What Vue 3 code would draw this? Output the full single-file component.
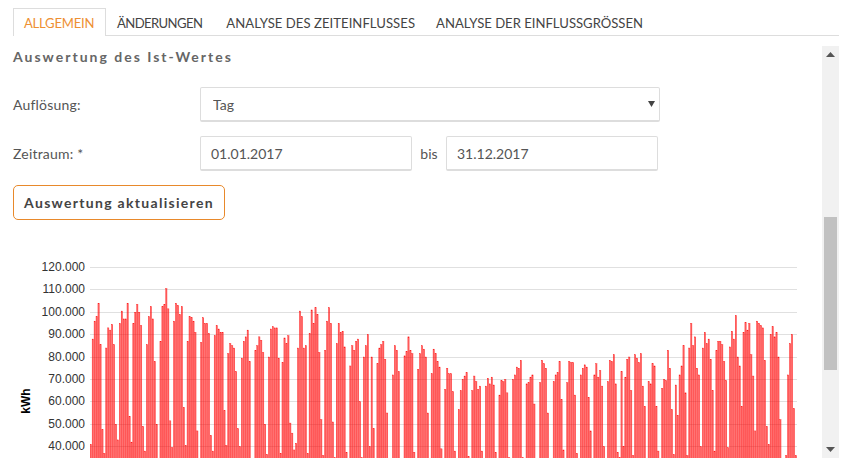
<script setup>
const tabs = ['Allgemein', 'Änderungen', 'Analyse des Zeiteinflusses', 'Analyse der Einflussgrößen']
const weeks = [
  [88,96,98,104,85.5,47.5,37],[84,93,92,94.5,85.5,50,43],[95,100.5,97,97,104,53.5,42],[95,100,103.5,100,94,49,38],
  [85.5,98,102.5,97,78,50,0],[87,102.5,103.5,110.5,101.5,51.5,39.5],[96,104,103,99,102.5,57.5,40.5],[87,98,97.5,96,91,47,0],
  [86.5,97.5,95,95,90.5,45,38],[89.5,94,92.5,91,91,56,40.5],[81.5,86,85,84,73.5,48,40],[79.5,87,89,92,78,0,0],
  [83,85,89,87.5,82,50,36.5],[80,92.5,93.5,93,93,79.5,37],[77.5,88.5,86,89.5,50.5,46,38.5],[41.5,84,100.5,98,84,85,37],
  [90.5,101,95,102,99,82,52],[36,83,96,102,95,51,35],[86,95,91,91.5,84.5,37.5,0],[76,85,83,87,88,60,35],
  [80,85,90,40,80,48,0],[77,84,85.5,87,79,55,0],[0,72,85,83,73.5,0,0],[80.5,82.5,89,83,81.5,37.5,0],
  [74.5,81.5,85,83.5,80,55,0],[72.5,83.5,81.5,78,75.5,39,0],[65.5,75,72.5,72.5,64.5,38,0],[56.5,65,70,71.5,73,35.5,0],
  [65,71.5,69,65.5,67,38,0],[67,70.5,68,71,67.5,37.5,0],[63,69.5,69,70,64,35,0],[70,72,75.5,75,78.5,35,0],
  [68,68.5,71,72,59,0,0],[68.5,78.5,77,75,55,0,0],[69,72,73,78,61,38.5,0],[68.5,78,77.5,77.5,63,37,0],
  [72,75,76.5,75.5,62,47,0],[72,77,71,74,67,40,0],[69,78.5,78,81,68,37.5,35],[73.5,40,71,79,80,65,36],
  [81,79.5,77.5,81.5,67,58,0],[69,68,77,76,58,38,0],[66,70,69.5,83,75,56.5,36.5],[67.5,54,72,76,85,64,36],
  [84,95,85,89,75,72,40],[84,91,86,88,79,65,38],[83,87,87,85.5,78,69.5,39.5],[84.5,91.5,88,98.5,80,76,58],
  [91,95.5,92,95,81,71.5,47],[96,95,94,93,78.5,49,41],[90,93.5,89,91,80,52,0],[0,36,72,86,90,57,36]
]
const values = [41, ...weeks.flat()]
const bars = values
  .map((v, i) => ({ x: 90 + i * 1.937, y: 267.4 + (120 - v) * 2.24, v }))
  .filter((b) => b.v > 0)
const gridRows = [267, 289, 312, 334, 357, 379, 401, 424, 446]
const ticks = ['120.000', '110.000', '100.000', '90.000', '80.000', '70.000', '60.000', '50.000', '40.000']
</script>

<template>
  <div class="page">
    <nav class="tabs">
      <a v-for="(t, i) in tabs" :key="t" class="tab" :class="['tab-' + i, { active: i === 0 }]">{{ t }}</a>
    </nav>
    <div class="panel">
      <main class="content">
        <h2 class="heading">Auswertung des Ist-Wertes</h2>
        <div class="row first">
          <label class="label">Auflösung:</label>
          <div class="select-wrap">
            <select class="control select"><option>Tag</option></select>
            <svg class="caret" width="7" height="6" viewBox="0 0 7 6"><path d="M0 0h7L3.5 6z" fill="#444" /></svg>
          </div>
        </div>
        <div class="row second">
          <label class="label">Zeitraum: *</label>
          <input class="control date" value="01.01.2017" />
          <span class="bis">bis</span>
          <input class="control date" value="31.12.2017" />
        </div>
        <button class="update">Auswertung aktualisieren</button>
        <svg class="chart" width="822" height="230" viewBox="0 240 822 230">
          <line v-for="r in gridRows" :key="r" x1="90" x2="797" :y1="r + 0.5" :y2="r + 0.5" class="grid" />
          <rect v-for="(b, i) in bars" :key="i" :x="b.x + 0.2" :y="b.y" width="1.25" :height="470 - b.y" class="bar" />
          <text v-for="(t, i) in ticks" :key="t" x="85" :y="gridRows[i] + 4" class="tick">{{ t }}</text>
          <text class="unit" transform="translate(30 401) rotate(-90)">kWh</text>
        </svg>
      </main>
      <aside class="scrollbar">
        <svg class="arrow" width="9" height="5" viewBox="0 0 9 5"><path d="M0 5L4.5 0 9 5z" fill="#555" /></svg>
        <div class="track"><div class="thumb"></div></div>
        <svg class="arrow" width="9" height="5" viewBox="0 0 9 5"><path d="M0 0h9L4.5 5z" fill="#555" /></svg>
      </aside>
    </div>
  </div>
</template>

<style scoped>
.page {
  width: 864px;
  height: 467px;
  box-sizing: border-box;
  padding: 8px 25px 0 13px;
  overflow: hidden;
  background: #fff;
  font-family: Lato, "Noto Sans", sans-serif;
  color: #555;
}
.tabs {
  display: flex;
  height: 27px;
  border-bottom: 1px solid #ddd;
}
.tab {
  box-sizing: border-box;
  height: 28px;
  padding: 5px 10px 0;
  border: 1px solid transparent;
  border-bottom: 0;
  font-size: 13.1px;
  line-height: 18px;
  text-transform: uppercase;
  color: #444;
  white-space: nowrap;
}
.tab-0 { width: 93px; letter-spacing: -0.25px; }
.tab-1 { padding-right: 12px; letter-spacing: -0.6px; }
.tab-2 { padding-right: 9px; letter-spacing: 0.05px; }
.tab.active {
  border-color: #ddd;
  background: #fff;
  color: #ee9033;
}
.panel {
  display: flex;
  height: 412px;
  margin-top: 10px;
}
.content {
  flex: 1;
  min-width: 0;
  overflow: hidden;
  margin-left: -13px;
  padding-left: 13px;
}
.heading {
  margin: 2px 0 0;
  font-size: 14px;
  line-height: 18px;
  font-weight: 700;
  letter-spacing: 2px;
  color: #666;
}
.row {
  display: flex;
  align-items: center;
  height: 35px;
}
.row.first { margin-top: 21px; }
.row.second { margin-top: 14px; }
.label {
  width: 187px;
  font-size: 14px;
  letter-spacing: 0.2px;
  color: #555;
}
.select-wrap {
  position: relative;
  width: 460px;
  height: 35px;
}
.control {
  box-sizing: border-box;
  height: 35px;
  border: 1px solid #ddd;
  border-bottom: 2px solid #ddd;
  border-radius: 2px;
  background: #fff;
  font: 14px Lato, "Noto Sans", sans-serif;
  color: #555;
  outline: none;
}
.select {
  appearance: none;
  width: 100%;
  padding: 0 12px;
}
.caret {
  position: absolute;
  right: 5px;
  top: 14px;
}
.date {
  width: 212px;
  padding: 0 10px;
}
.bis {
  width: 34px;
  text-align: center;
  font-size: 14px;
}
.update {
  display: block;
  box-sizing: border-box;
  width: 212px;
  height: 35px;
  margin: 14px 0 0;
  padding: 0;
  border: 1px solid #e8892b;
  border-radius: 5px;
  background: #fff;
  font: 700 14px Lato, "Noto Sans", sans-serif;
  letter-spacing: 1.3px;
  color: #444;
}
.chart {
  display: block;
  margin: 20px 0 0 -13px;
}
.grid {
  stroke: #e0e0e0;
  stroke-width: 1;
}
.bar {
  fill: rgba(255, 0, 0, 0.6);
  stroke: rgba(255, 0, 0, 0.85);
  stroke-width: 0.4;
}
.tick {
  font: 12px "Liberation Sans", Arial, sans-serif;
  fill: #333;
  text-anchor: end;
}
.unit {
  font: 700 12px "Liberation Sans", Arial, sans-serif;
  fill: #000;
  text-anchor: middle;
}
.scrollbar {
  flex: none;
  width: 17px;
  display: flex;
  flex-direction: column;
  align-items: center;
  background: #f1f1f1;
}
.arrow {
  flex: none;
  margin: 6px 0;
}
.track {
  flex: 1;
  width: 13px;
}
.thumb {
  width: 13px;
  height: 153px;
  margin-top: 154px;
  background: #c1c1c1;
}
</style>
